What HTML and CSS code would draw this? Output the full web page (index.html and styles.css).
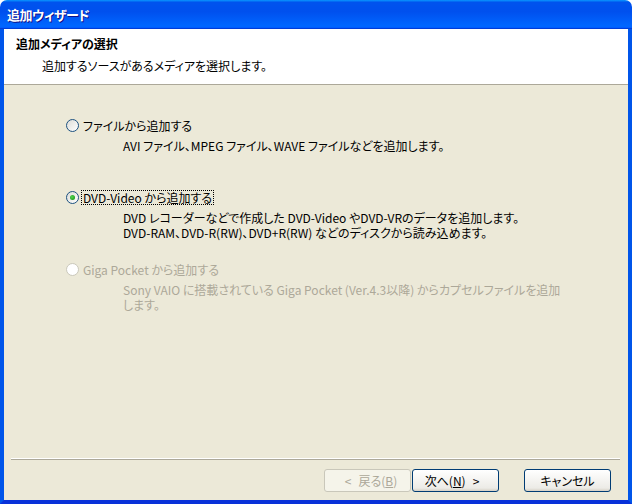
FILE: index.html
```html
<!doctype html>
<html lang="ja">
  <head>
    <meta charset="UTF-8" />
    <title>追加ウィザード</title>
    <link rel="stylesheet" href="styles.css">
  </head>
  <body>
    <div class="window">
      <div class="titlebar"><span class="title">追加ウィザード</span></div>
      <div class="frame">
        <div class="header">
          <div class="header-title">追加メディアの選択</div>
          <div class="header-sub">追加するソースがあるメディアを選択します。</div>
        </div>

        <div class="body">
          <div class="option">
            <div class="radio-row">
              <span class="radio"></span>
              <span class="label">ファイルから追加する</span>
            </div>
            <p class="desc">AVI ファイル、MPEG ファイル、WAVE ファイルなどを追加します。</p>
          </div>

          <div class="option">
            <div class="radio-row">
              <span class="radio checked"></span>
              <span class="label focused">DVD-Video から追加する</span>
            </div>
            <p class="desc">
              DVD レコーダーなどで作成した DVD-Video やDVD-VRのデータを追加します。<br>
              DVD-RAM、DVD-R(RW)、DVD+R(RW) などのディスクから読み込めます。
            </p>
          </div>

          <div class="option disabled">
            <div class="radio-row">
              <span class="radio"></span>
              <span class="label">Giga Pocket から追加する</span>
            </div>
            <p class="desc">
              Sony VAIO に搭載されている Giga Pocket (Ver.4.3以降) からカプセルファイルを追加<br>
              します。
            </p>
          </div>
        </div>

        <div class="footer">
          <div class="separator"></div>
          <div class="buttons">
            <button class="btn" disabled><span class="arrow">&lt;</span>戻る(<u>B</u>)</button>
            <button class="btn">次へ(<u>N</u>)<span class="arrow">&gt;</span></button>
            <button class="btn btn-cancel">キャンセル</button>
          </div>
        </div>
      </div>
    </div>
  </body>
</html>
```

FILE: styles.css
```css
html,
body {
  margin: 0;
  height: 100%;
}
body {
  font-family: "Noto Sans CJK JP", "Liberation Sans", sans-serif;
  font-size: 12px;
  font-feature-settings: "palt" 1;
  color: #000;
  background: #fff;
}
.window {
  width: 632px;
  height: 504px;
  display: flex;
  flex-direction: column;
}
.titlebar {
  height: 29px;
  flex-shrink: 0;
  display: flex;
  align-items: center;
  padding-left: 7px;
  border-radius: 7px 7px 0 0;
  background: linear-gradient(180deg, #0997ff, #0053ee 8%, #0050ee 40%, #06f 88%, #06f 93%, #005bff 95%, #003dd7 96%, #003dd7);
}
.title {
  color: #fff;
  font-weight: bold;
  font-size: 13px;
  letter-spacing: -0.5px;
  text-shadow: 1px 1px #0f1089;
}
.frame {
  flex: 1;
  display: flex;
  flex-direction: column;
  border-style: solid;
  border-width: 0 4px 4px;
  border-color: #0055ea #0055ea #0831d9;
  background: #ece9d8;
}
.header {
  height: 56px;
  box-sizing: border-box;
  flex-shrink: 0;
  padding: 8px 0 0 12px;
  background: #fff;
  border-bottom: 1px solid #aca899;
  line-height: 14px;
}
.header-title {
  font-weight: bold;
}
.header-sub {
  margin: 8px 0 0 26px;
}
.body {
  flex: 1;
  padding: 34px 0 0 62px;
}
.option {
  margin-bottom: 11px;
}
.radio-row {
  display: flex;
  align-items: center;
  height: 13px;
}
.radio {
  width: 13px;
  height: 13px;
  box-sizing: border-box;
  border: 1px solid #1c5180;
  border-radius: 50%;
  background: linear-gradient(135deg, #dcdcd7, #fff);
  display: flex;
  align-items: center;
  justify-content: center;
}
.radio.checked::after {
  content: "";
  width: 5px;
  height: 5px;
  border-radius: 50%;
  background: radial-gradient(circle at 40% 40%, #55d551, #21a121 70%);
}
.label {
  margin-left: 2px;
  padding: 0 1px;
  border: 1px dotted transparent;
  line-height: 13px;
}
.label.focused {
  border-color: #000;
}
.desc {
  margin: 6px 0 0 57px;
  min-height: 42px;
  line-height: 15px;
  white-space: nowrap;
}
.disabled {
  color: #aca899;
}
.disabled .radio {
  border-color: #cac8bb;
  background: #fff;
}
.footer {
  flex-shrink: 0;
  padding-bottom: 8px;
}
.separator {
  margin: 0 8px 0 7px;
  height: 0;
  border-top: 1px solid #fff;
  border-bottom: 1px solid #aca899;
}
.buttons {
  display: flex;
  justify-content: flex-end;
  gap: 1px;
  margin-top: 9px;
  padding-right: 17px;
}
.btn {
  width: 87px;
  height: 23px;
  padding: 0;
  font-family: inherit;
  font-size: 12px;
  font-feature-settings: "palt" 1;
  color: #000;
  border: 1px solid #003c74;
  border-radius: 3px;
  background: linear-gradient(180deg, #fff 0%, #ecebe6 86%, #d6d0c5 100%);
}
.btn .arrow {
  margin: 0 7px;
}
.btn:disabled {
  color: #aca899;
  border-color: #c9c7ba;
  background: #f5f4ea;
}
.btn-cancel {
  margin-left: 24px;
}
```
